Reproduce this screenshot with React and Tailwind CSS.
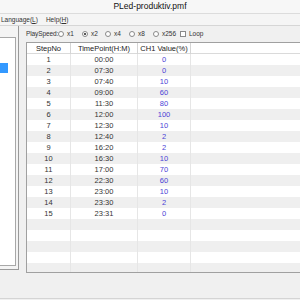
import React from "react";

const rows = [
  ["1", "00:00", "0"],
  ["2", "07:30", "0"],
  ["3", "07:40", "10"],
  ["4", "09:00", "60"],
  ["5", "11:30", "80"],
  ["6", "12:00", "100"],
  ["7", "12:30", "10"],
  ["8", "12:40", "2"],
  ["9", "16:20", "2"],
  ["10", "16:30", "10"],
  ["11", "17:00", "70"],
  ["12", "22:30", "60"],
  ["13", "23:00", "10"],
  ["14", "23:30", "2"],
  ["15", "23:31", "0"],
  ["", "", ""],
  ["", "", ""],
  ["", "", ""],
  ["", "", ""],
  ["", "", ""],
];

function Radio({ label, checked, w }) {
  return (
    <div className={`flex items-center gap-[3px] ${w}`}>
      <span className="w-[6px] h-[6px] rounded-full border border-[#8a8a8a] bg-white flex items-center justify-center">
        {checked && <span className="w-[2px] h-[2px] rounded-full bg-[#222]" />}
      </span>
      <span>{label}</span>
    </div>
  );
}

export default function App() {
  return (
    <div className="w-[300px] h-[300px] overflow-hidden bg-[#f0f0f0] text-[#222] font-['Liberation_Sans',Arial,sans-serif]">
      <div className="h-[14px] bg-[#f7f7f7] border-b border-[#dcdcdc] flex items-center justify-center text-[8.5px] text-[#111]">
        PLed-produktiv.pmf
      </div>

      <div className="h-[12px] bg-[#f5f5f5] border-b border-[#d6d6d6] flex items-center gap-[8px] pl-[1px] text-[6.5px] text-[#333]">
        <span>Language(<span className="underline">L</span>)</span>
        <span>Help(<span className="underline">H</span>)</span>
      </div>

      <div className="flex h-[247px]">
        <div className="w-[19px] pt-[11px] h-[244px] border-r border-b border-[#9a9a9a] bg-[#f4f4f4]">
          <div className="w-[16px] h-[229px] bg-white border-t border-r border-b border-[#a8a8a8] pt-[25px]">
            <div className="w-[8px] h-[10px] bg-[#3399ff]" />
          </div>
        </div>

        <div className="flex-1 pl-[7px] flex flex-col">
          <div className="h-[16px] flex items-center text-[6.5px] text-[#333]">
            <span className="w-[32px] tracking-[-0.1px]">PlaySpeed:</span>
            <Radio label="x1" w="w-[24px]" />
            <Radio label="x2" checked w="w-[23px]" />
            <Radio label="x4" w="w-[24px]" />
            <Radio label="x8" w="w-[24px]" />
            <Radio label="x256" w="w-[27px]" />
            <div className="flex items-center gap-[3px]">
              <span className="w-[6px] h-[6px] border border-[#8a8a8a] bg-white" />
              <span>Loop</span>
            </div>
          </div>

          <div className="h-[231px] bg-white border-l border-t border-b border-[#a0a0a0] overflow-hidden text-[7.5px]">
            <div className="h-[11px] grid grid-cols-[44px_67px_53px_1fr] border-b border-[#dadada] text-[#222]">
              <div className="flex items-center justify-center border-r border-[#d5d5d5]">StepNo</div>
              <div className="flex items-center justify-center border-r border-[#d5d5d5]">TimePoint(H:M)</div>
              <div className="flex items-center justify-center border-r border-[#d5d5d5]">CH1 Value(%)</div>
              <div />
            </div>
            {rows.map((r, i) => (
              <div
                key={i}
                className={`h-[11px] grid grid-cols-[44px_67px_53px_1fr] ${i % 2 === 1 ? "bg-[#efefef]" : "bg-white"}`}
              >
                <div className="flex items-center justify-center border-r border-[#e6e6e6] text-[#333]">{r[0]}</div>
                <div className="flex items-center justify-center border-r border-[#e6e6e6] text-[#333]">{r[1]}</div>
                <div className="flex items-center justify-center border-r border-[#e6e6e6] text-[#4a3fd6]">{r[2]}</div>
                <div />
              </div>
            ))}
          </div>
        </div>
      </div>

      <div className="h-[26px] border-b border-[#d4d4d4]" />
    </div>
  );
}
